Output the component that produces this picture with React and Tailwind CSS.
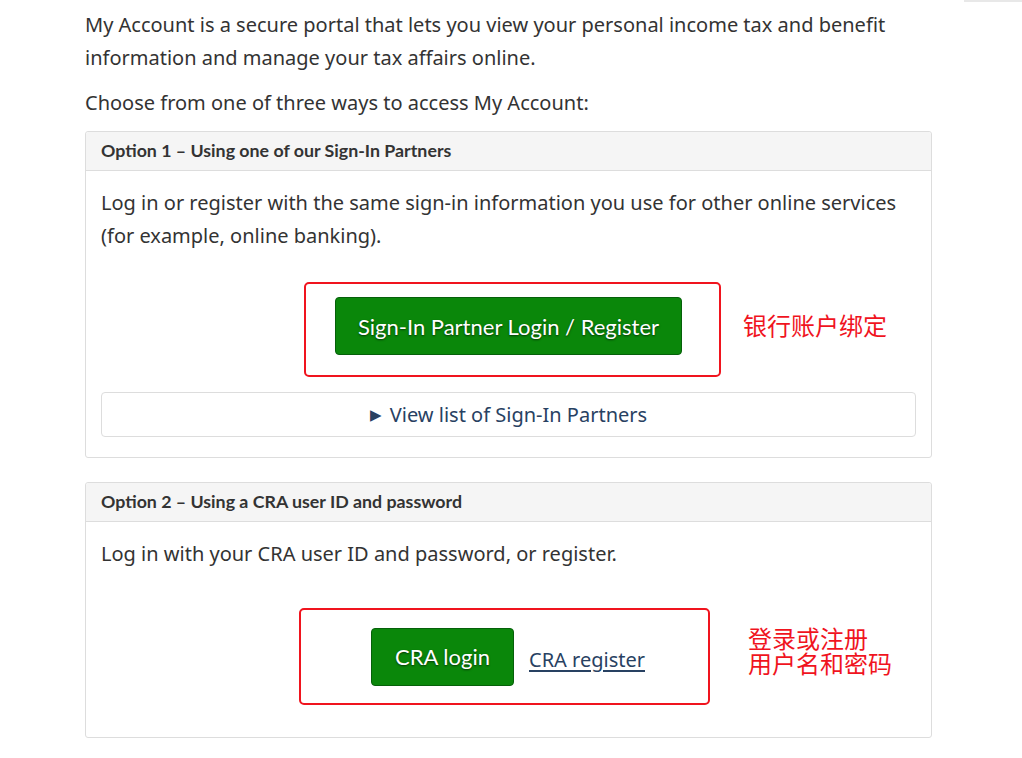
import { useState } from "react";

const body = "font-['Noto_Sans',sans-serif]";
const lato = "font-['Lato','Noto_Sans',sans-serif]";
const cjk = "font-['Noto_Sans_CJK_SC','Noto_Sans',sans-serif]";

const Panel = ({ title, children }) => (
  <section className="border border-[#dddddd] rounded-[3px] bg-white">
    <header className="h-[39px] px-[15px] flex items-center bg-[#f5f5f5] border-b border-[#dddddd] rounded-t-[3px]">
      <h2 className={`${lato} text-[17.8px] font-bold text-[#333333] leading-none`}>
        {title}
      </h2>
    </header>
    <div className="px-[15px] pt-[15px] pb-[20px]">{children}</div>
  </section>
);

const GreenButton = ({ children, className = "" }) => (
  <button
    className={`${lato} bg-[#0a870a] text-white text-[22px] rounded-[4px] border border-[#06600a] [text-shadow:0_1px_2px_rgba(0,0,0,0.6)] ${className}`}
  >
    {children}
  </button>
);

export default function App() {
  const [open, setOpen] = useState(false);

  return (
    <div className={`${body} bg-white text-[#333333] min-h-[758px] relative`}>
      <div className="absolute right-0 top-0 w-[58px] h-[2px] bg-[#e8e8e8]" />
      <main className="w-[847px] ml-[85px] pt-[8px]">
        <p className="text-[20px] leading-[33px]">
          My Account is a secure portal that lets you view your personal income
          tax and benefit information and manage your tax affairs online.
        </p>
        <p className="text-[20px] leading-[33px] mt-[12px]">
          Choose from one of three ways to access My Account:
        </p>

        <div className="mt-[12px]">
          <Panel title="Option 1 – Using one of our Sign-In Partners">
            <p className="text-[20px] leading-[33px]">
              Log in or register with the same sign-in information you use for
              other online services (for example, online banking).
            </p>
            <div className="flex justify-center mt-[30px] pl-[8px]">
              <div className="relative border-2 border-[#f0141e] rounded-[5px] pl-[29px] pr-[37px] pt-[13px] pb-[20px]">
                <GreenButton className="h-[58px] px-[22px]">
                  Sign-In Partner Login / Register
                </GreenButton>
                <span
                  className={`${cjk} absolute left-[calc(100%+24px)] top-[27px] whitespace-nowrap text-[24px] leading-[28px] text-[#f0141e]`}
                >
                  银行账户绑定
                </span>
              </div>
            </div>
            <button
              onClick={() => setOpen(!open)}
              className="mt-[15px] w-full h-[45px] border border-[#dddddd] rounded-[4px] flex items-center justify-center text-[20px] text-[#284162]"
            >
              <span className="text-[15px] mr-[8px]">{open ? "▼" : "▶"}</span>
              View list of Sign-In Partners
            </button>
          </Panel>
        </div>

        <div className="mt-[24px]">
          <Panel title="Option 2 – Using a CRA user ID and password">
            <p className="text-[20px] leading-[33px]">
              Log in with your CRA user ID and password, or register.
            </p>
            <div className="flex justify-center mt-[38px] mb-[12px]">
              <div className="relative border-2 border-[#f0141e] rounded-[5px] w-[411px] h-[97px] flex items-center pl-[70px] -ml-[8px]">
                <GreenButton className="h-[58px] w-[143px]">CRA login</GreenButton>
                <a
                  href="#"
                  className="ml-[15px] mt-[6px] text-[20px] text-[#284162] underline underline-offset-[3px]"
                >
                  CRA register
                </a>
                <span
                  className={`${cjk} absolute left-[calc(100%+40px)] top-[15px] whitespace-nowrap text-[24px] leading-[25px] text-[#f0141e]`}
                >
                  登录或注册
                  <br />
                  用户名和密码
                </span>
              </div>
            </div>
          </Panel>
        </div>
      </main>
    </div>
  );
}
